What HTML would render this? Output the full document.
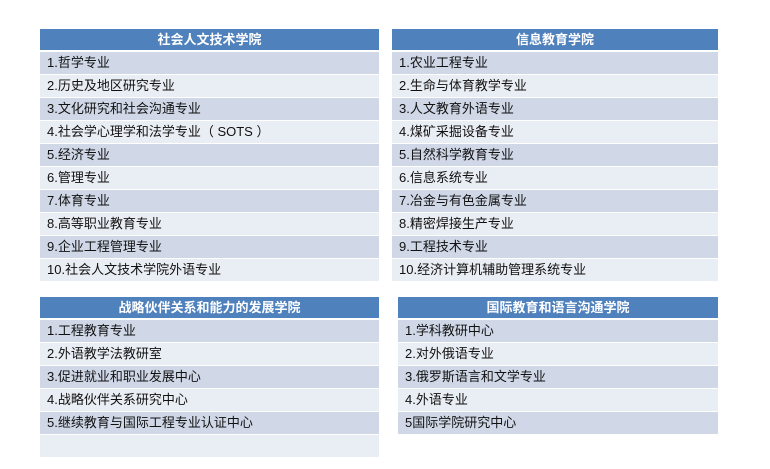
<!DOCTYPE html>
<html><head><meta charset="utf-8"><style>
body{margin:0;width:770px;height:469px;background:#fff;position:relative;font-family:"Liberation Sans","Noto Sans CJK SC",sans-serif;overflow:hidden}
.t{position:absolute}
.h{height:21px;background:#4f81bd;color:#fff;font-weight:bold;font-size:13px;line-height:21px;text-align:center;margin-bottom:2px}
.r{height:22px;margin-bottom:1px;font-size:13px;line-height:22px;padding-left:7px;color:#111}
.d{background:#d0d8e8}.l{background:#e9edf4}
</style></head><body>
<div class="t" style="left:40px;top:29px;width:339px">
<div class="h">社会人文技术学院</div>
<div class="r d">1.哲学专业</div>
<div class="r l">2.历史及地区研究专业</div>
<div class="r d">3.文化研究和社会沟通专业</div>
<div class="r l">4.社会学心理学和法学专业（ SOTS ）</div>
<div class="r d">5.经济专业</div>
<div class="r l">6.管理专业</div>
<div class="r d">7.体育专业</div>
<div class="r l">8.高等职业教育专业</div>
<div class="r d">9.企业工程管理专业</div>
<div class="r l">10.社会人文技术学院外语专业</div>
</div>
<div class="t" style="left:392px;top:29px;width:326px">
<div class="h">信息教育学院</div>
<div class="r d">1.农业工程专业</div>
<div class="r l">2.生命与体育教学专业</div>
<div class="r d">3.人文教育外语专业</div>
<div class="r l">4.煤矿采掘设备专业</div>
<div class="r d">5.自然科学教育专业</div>
<div class="r l">6.信息系统专业</div>
<div class="r d">7.冶金与有色金属专业</div>
<div class="r l">8.精密焊接生产专业</div>
<div class="r d">9.工程技术专业</div>
<div class="r l">10.经济计算机辅助管理系统专业</div>
</div>
<div class="t" style="left:40px;top:297px;width:339px">
<div class="h">战略伙伴关系和能力的发展学院</div>
<div class="r d">1.工程教育专业</div>
<div class="r l">2.外语教学法教研室</div>
<div class="r d">3.促进就业和职业发展中心</div>
<div class="r l">4.战略伙伴关系研究中心</div>
<div class="r d">5.继续教育与国际工程专业认证中心</div>
<div class="r l"></div>
</div>
<div class="t" style="left:398px;top:297px;width:320px">
<div class="h">国际教育和语言沟通学院</div>
<div class="r d">1.学科教研中心</div>
<div class="r l">2.对外俄语专业</div>
<div class="r d">3.俄罗斯语言和文学专业</div>
<div class="r l">4.外语专业</div>
<div class="r d">5国际学院研究中心</div>
</div>
</body></html>
